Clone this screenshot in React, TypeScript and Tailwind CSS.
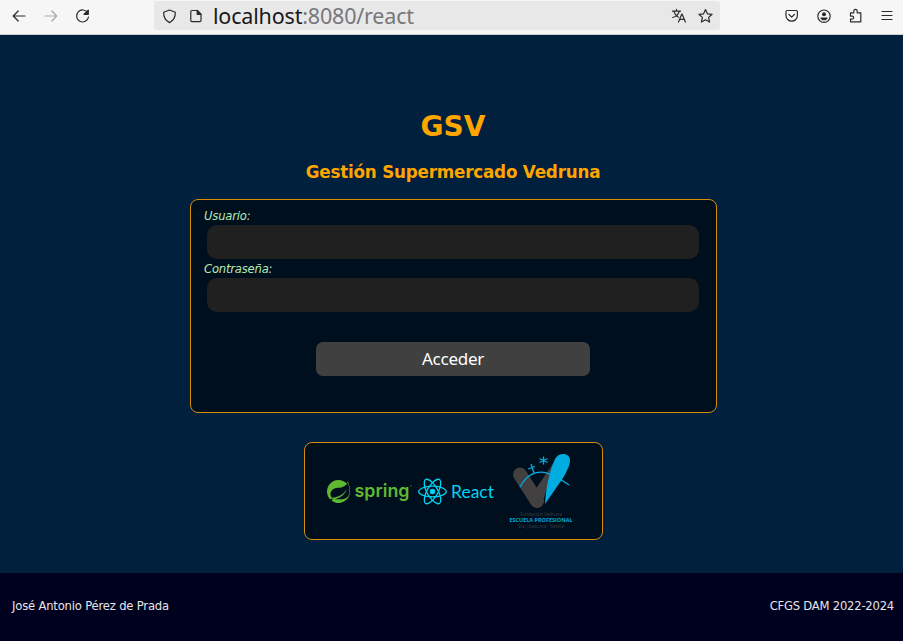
import React from "react";
import { SiSpring, SiReact } from "react-icons/si";

const stroke = {
  fill: "none",
  stroke: "currentColor",
  strokeWidth: 1.2,
  strokeLinecap: "round" as const,
  strokeLinejoin: "round" as const,
};

function Icon({ children, className = "" }: { children: React.ReactNode; className?: string }) {
  return (
    <svg viewBox="0 0 16 16" className={`h-4 w-4 shrink-0 ${className}`} {...stroke}>
      {children}
    </svg>
  );
}

function Toolbar() {
  return (
    <header className="flex h-[35px] shrink-0 items-start border-b border-[#cfcfd0] bg-[#f6f6f6] text-[#2b2b2e]">
      <div className="flex w-[154px] gap-4 pt-2 pl-[11px]">
        <Icon>
          <path d="M14 8H2.400M7.200 3L2.200 8l5 5" />
        </Icon>
        <Icon className="text-[#a9a9aa]">
          <path d="M2 8h11.600M8.800 3l5 5-5 5" />
        </Icon>
        <Icon>
          <path d="M12.800 5A6 6 0 1 0 13.500 9" />
          <path d="M13.300 2.100v4.200H9z" fill="currentColor" />
        </Icon>
      </div>
      <div className="mt-px flex h-[29px] w-[566px] items-center rounded-[3px] bg-[#e8e8e8] pr-[7px] pl-[7px]">
        <Icon>
          <path d="M8.500 2L14.300 4.200c.2 4.700-1.700 8.300-5.800 10.400C4.400 12.500 2.500 8.900 2.700 4.200z" />
        </Icon>
        <Icon className="ml-[11px]">
          <path d="M4 2.500h5.300l3.700 3.700v6.300a1.200 1.200 0 0 1-1.200 1.200H4a1.200 1.200 0 0 1-1.200-1.200V3.700A1.200 1.200 0 0 1 4 2.500z" />
          <path d="M9.200 2.500v3.800H13z" fill="currentColor" />
        </Icon>
        <span className="ml-[9px] font-['Noto_Sans',sans-serif] text-[21.500px] leading-[29px] tracking-[-0.180px] whitespace-nowrap text-[#18181a]">
          localhost<span className="text-[#77777a]">:8080/react</span>
        </span>
        <Icon className="ml-auto">
          <path d="M1.500 3.200h8M5.500 1.400v1.800M2.800 3.400c1 3 2.500 4.600 4.600 5.800M8.200 3.400c-.8 3-3.200 5.300-6.500 6.100M7.500 14l3.200-7.800h.5L14.400 14M8.700 11.400h4.500" />
        </Icon>
        <Icon className="ml-[10px]">
          <path d="M8.500 1.500l1.900 4.300 4.700.5-3.500 3.100 1 4.700L8.500 11.700l-4.100 2.400 1-4.700L1.900 6.300l4.700-.5z" />
        </Icon>
      </div>
      <div className="flex flex-1 justify-end gap-4 pt-2 pr-[8px]">
        <Icon>
          <path d="M4.200 2.500h9a1.200 1.200 0 0 1 1.200 1.200V7.500a5.700 5.700 0 0 1-11.400 0V3.700a1.200 1.200 0 0 1 1.200-1.200z" />
          <path d="M6 6.500L8.700 9.200l2.700-2.700" />
        </Icon>
        <Icon>
          <circle cx="9" cy="8.200" r="6.200" />
          <circle cx="9" cy="6.200" r="2" fill="currentColor" stroke="none" />
          <path d="M5.400 9.400h7.200c0 1.700-1.700 2.900-3.600 2.900s-3.600-1.200-3.600-2.900z" fill="currentColor" stroke="none" />
        </Icon>
        <Icon>
          <path d="M3.500 4.800h3.300V3a1.700 1.700 0 0 1 3.400 0v1.800h3.600v9H3.500v-2.700h1.700a1.500 1.500 0 0 0 0-3H3.500z" />
        </Icon>
        <Icon>
          <path d="M3 3.500h10M3 7.500h10M3 11.500h10" />
        </Icon>
      </div>
    </header>
  );
}

function Field({ label, type }: { label: string; type: string }) {
  return (
    <label className="block h-[53px] text-[11.600px] leading-4 tracking-[-0.200px] text-[#b4ebb4] italic">
      {label}
      <input
        type={type}
        className="mt-[1.750px] ml-[2.500px] block h-[33.400px] w-[492px] rounded-[10px] bg-[#202020] px-3 text-white not-italic outline-none"
      />
    </label>
  );
}

function VedrunaLogo() {
  return (
    <svg viewBox="0 0 70 80" className="-mt-[2px] ml-[10px] h-[80px] w-[70px] shrink-0">
      <path d="M13 24.500L30 51" stroke="#424040" strokeWidth="14" strokeLinecap="round" />
      <path d="M24 46L49 9L36 51Q31 60 24 54z" fill="#424040" />
      <path d="M48 9C51 2 63 2 63 10.500C63 15 60 21 56 28L38 54C39 37 42 23 48 9z" fill="#00ace0" />
      <path d="M13 37C22 20 36 19 48 27M53 29L62 35" fill="none" stroke="#00ace0" strokeWidth="1.400" />
      <path
        d="M24 14l3 9M21 19l7-2.500M36.500 6.500v8M32.500 8.500l8 4M32.500 12.500l8-4"
        stroke="#00ace0"
        strokeWidth="1.300"
      />
      <g textAnchor="middle" className="font-['Open_Sans',sans-serif]">
        <text x="34" y="65.500" fontSize="4.600" textLength="42" fill="#3a4046">
          Fundación Vedruna
        </text>
        <text x="34" y="72" fontSize="5" fontWeight="700" textLength="63" lengthAdjust="spacingAndGlyphs" fill="#00a7db">
          ESCUELA PROFESIONAL
        </text>
        <text x="34" y="78" fontSize="4.400" textLength="46" fill="#3a4046">
          Sta. Joaquina - Sevilla
        </text>
      </g>
    </svg>
  );
}

export default function App() {
  return (
    <div className="flex h-[641px] w-[903px] flex-col overflow-hidden bg-[#00203d] font-['DejaVu_Sans',sans-serif]">
      <Toolbar />
      <main className="flex flex-1 flex-col items-center pl-[3px]">
        <h1 className="mt-[75px] text-[28px] leading-[34px] font-bold text-[#ffa500]">GSV</h1>
        <h2 className="mt-[17px] text-[16.800px] leading-[22px] font-bold tracking-[-0.220px] text-[#ffa500]">
          Gestión Supermercado Vedruna
        </h2>
        <form
          className="mt-[16px] flex h-[214px] w-[527px] shrink-0 flex-col rounded-[8px] border border-[#d88d09] bg-[#000f1e] px-[13.500px] pt-[7.500px]"
          onSubmit={(e) => e.preventDefault()}
        >
          <Field label="Usuario:" type="text" />
          <Field label="Contraseña:" type="password" />
          <button className="mt-[28.750px] h-[33.400px] w-[274px] self-center rounded-[7px] bg-[#404040] font-['Noto_Sans',sans-serif] text-[17px] tracking-[-0.250px] text-white">
            Acceder
          </button>
        </form>
        <section className="mt-[29px] flex h-[98px] w-[299px] shrink-0 items-center rounded-[8px] border border-[#d88d09] bg-[#000f1e] pl-[22px]">
          <SiSpring className="h-[23px] w-[23px] shrink-0 text-[#5fb832]" />
          <svg viewBox="0 0 62 30" className="ml-[4px] h-[30px] w-[62px] shrink-0 font-['Inter',sans-serif]">
            <text x="0.500" y="20.500" fontSize="18" fontWeight="600" textLength="55" lengthAdjust="spacingAndGlyphs" fill="#5fb832">
              spring
            </text>
            <circle cx="57" cy="10" r=".8" fill="#39702a" />
          </svg>
          <SiReact className="ml-[2px] h-[29px] w-[29px] shrink-0 text-[#00d2f2]" />
          <svg viewBox="0 0 48 30" className="ml-[2px] h-[30px] w-[48px] shrink-0 font-['Lato',sans-serif]">
            <text x="2" y="21.500" fontSize="16.500" textLength="43" lengthAdjust="spacingAndGlyphs" fill="#00d2f2">
              React
            </text>
          </svg>
          <VedrunaLogo />
        </section>
      </main>
      <footer className="flex h-[68px] shrink-0 items-center justify-between bg-[#00001f] pr-[9px] pb-px pl-[12px] text-[11.600px] text-[#e6e6e6]">
        <span className="tracking-[-0.190px]">José Antonio Pérez de Prada</span>
        <span className="tracking-[-0.220px]">CFGS DAM 2022-2024</span>
      </footer>
    </div>
  );
}
